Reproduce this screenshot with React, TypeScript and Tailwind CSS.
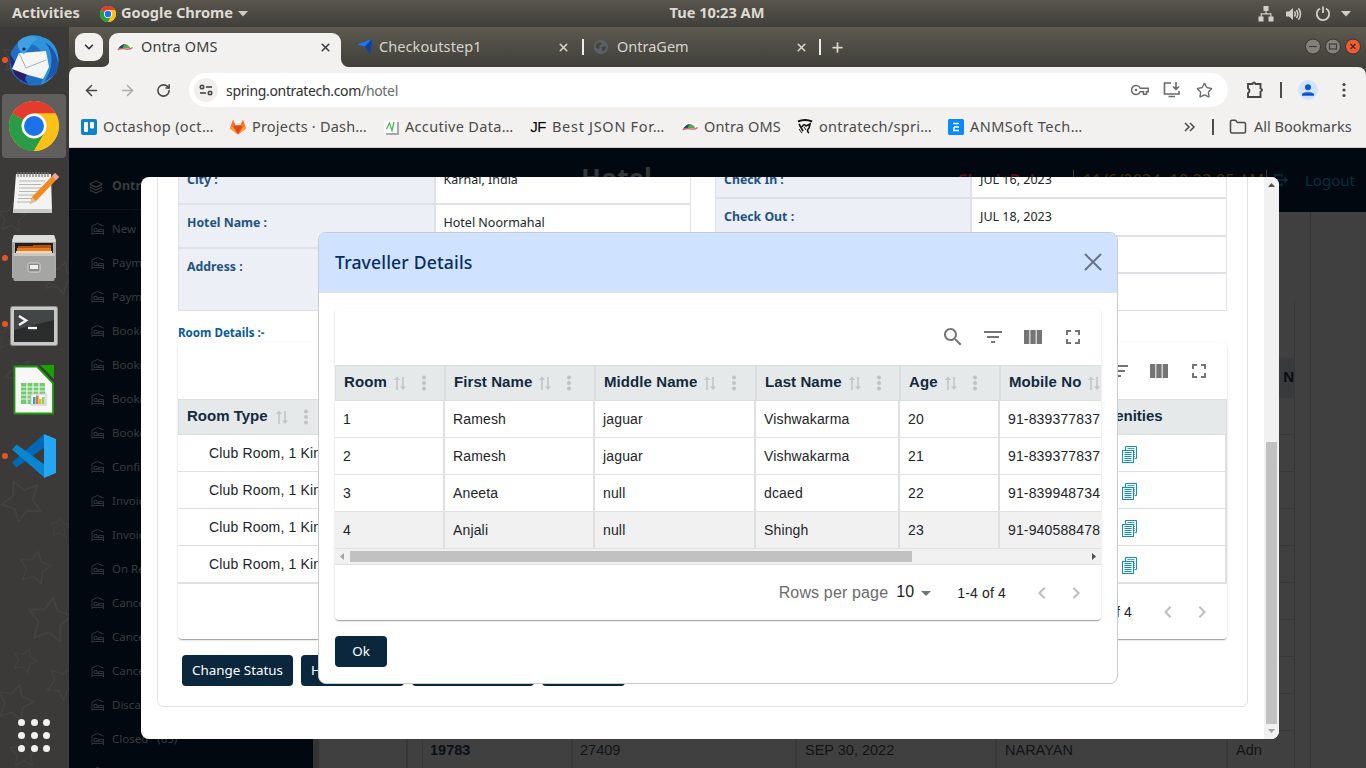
import type { ReactNode } from "react";
import { ArrowLeft, ArrowRight, ChevronDown, Folder, Layers, Plus, RotateCw, Star, X } from "lucide-react";

/* ---------- small drawings ---------- */

function ChromeLogo({ size }: { size: number }) {
  return (
    <svg width={size} height={size} viewBox="0 0 48 48">
      <circle cx="24" cy="24" r="24" fill="#fbc116" />
      <path d="M24 24 L3.2 12 A24 24 0 0 1 44.8 12 L24 12 Z" fill="#e33b2e" />
      <path d="M24 24 L3.2 12 A24 24 0 0 0 24 48 L34.4 30 Z" fill="#2a9c47" />
      <path d="M24 12 H44.8 A24 24 0 0 1 24 48 L34.4 30 Z" fill="#fbc116" />
      <circle cx="24" cy="24" r="12" fill="#fff" />
      <circle cx="24" cy="24" r="9.6" fill="#1a73e8" />
    </svg>
  );
}

function OntraLogo() {
  return (
    <svg width="16" height="16" viewBox="0 0 16 16">
      <rect y="4" width="16" height="8" fill="#f8f8f8" />
      <path d="M1 9.800C3 6.500 5.500 5 8 5L7 9.500Z" fill="#27467f" />
      <path d="M5.500 9.500C6.500 6.500 7.500 5 8.500 5C11 5.500 12.500 7.500 13.500 9.500Z" fill="#57a84a" />
      <path d="M.5 11C4 9.400 7 9.600 9.500 10.200C12 10.600 14 10 15.600 8.500" fill="none" stroke="#e2505a" strokeWidth="1.100" />
    </svg>
  );
}

function Thunderbird() {
  return (
    <svg width="52" height="52" viewBox="0 0 52 52">
      <circle cx="26" cy="27" r="24.5" fill="#1f6fc4" />
      <path d="M12 8C18-1 30 1 34 3C44 5 52 16 50 29C49 40 42 48 32 51C38 42 41 30 34 18C28 10 20 8 12 8Z" fill="#2f93dc" />
      <path d="M36 8C46 16 46 34 36 48L48 40C53 28 48 14 36 8Z" fill="#1b57ae" />
      <path d="M2 20C1 32 6 44 20 50L12 36Z" fill="#1f2b7d" />
      <path d="M5 36L20 38L16 47C10 45 6 41 5 36Z" fill="#2c1d66" />
      <path d="M11 19L38 17L41 33L35 45L20 41L4 35Z" fill="#f5f5f6" />
      <path d="M11 19L18 34L38 26" fill="none" stroke="#a9aeb6" strokeWidth="1" />
      <path d="M10 8C14 2 24 0 30 5C24 7 22 14 16 20C12 18 9 14 10 8Z" fill="#3fa0e4" />
      <circle cx="16" cy="15" r="1.6" fill="#0d2a56" />
    </svg>
  );
}

function TextEditor() {
  return (
    <svg width="50" height="48" viewBox="0 0 50 48">
      <path d="M7 6H42L43 44H4Z" fill="#f3f3f1" />
      <path d="M4 41H43V45H4Z" fill="#c9c9c6" />
      <path d="M9 4V9M12 4V9M15 4V9M18 4V9M21 4V9M24 4V9M27 4V9M30 4V9M33 4V9M36 4V9M39 4V9" stroke="#777" strokeWidth="1.3" />
      <path d="M10 13H36M10 16.5H32M10 20H35M10 23.5H30M9 27H28M9 30.500H26M8 34H22" stroke="#b5b5b3" strokeWidth="1" />
      <path d="M46 5L50 9L27 33L21 36L23 29Z" fill="#f08a1d" />
      <path d="M46 5L50 9L47 12L43 8Z" fill="#e7a6a3" />
      <path d="M23 29L27 33L21 36Z" fill="#dcc39c" />
    </svg>
  );
}

function FilesIcon() {
  return (
    <svg width="46" height="48" viewBox="0 0 46 48">
      <path d="M1 6L3 1H43L45 6V44H1Z" fill="#a9a9a7" />
      <path d="M3 1H43L45 8H1Z" fill="#dcdcda" />
      <rect x="4" y="9" width="38" height="14" fill="#23211f" />
      <path d="M7 12H22V11H40V18H7Z" fill="#b9500f" />
      <rect x="6" y="14" width="34" height="3" fill="#e57b25" />
      <rect x="5" y="17" width="36" height="3" fill="#f3d8ab" />
      <rect x="2.500" y="19" width="41" height="28" rx="1.500" fill="#a5a5a3" />
      <path d="M2.500 19H43.500V22H2.500Z" fill="#c9c9c7" />
      <rect x="17" y="29" width="12" height="9" rx="1.500" fill="#8b8b89" stroke="#d6d6d4" />
      <rect x="19" y="31" width="8" height="4" fill="#f0f0ef" />
    </svg>
  );
}

function TerminalIcon() {
  return (
    <svg width="48" height="40" viewBox="0 0 48 40">
      <rect x=".5" y=".5" width="47" height="39" rx="2" fill="#c8c8c6" stroke="#8a8a88" />
      <rect x="4" y="4" width="40" height="32" fill="#2b2d2d" />
      <path d="M4 4H44V14L4 24Z" fill="#434646" />
      <path d="M9 10L16 14.500L9 19" fill="none" stroke="#f2f2f2" strokeWidth="2.600" />
      <path d="M18 22H27" stroke="#f2f2f2" strokeWidth="2.400" />
    </svg>
  );
}

function CalcIcon() {
  return (
    <svg width="42" height="50" viewBox="0 0 42 50">
      <path d="M1.500 1.500H24L40 18V48.500H1.500Z" fill="#f7f8f6" stroke="#1f9a10" strokeWidth="1.800" />
      <path d="M27 0H41V14Z" fill="#18a303" />
      <rect x="8" y="18" width="24" height="21" fill="#76c973" />
      <path d="M8 22H32M8 26H32M8 30H32M8 34H32M14 18V39M20 18V39M26 18V39" stroke="#e8f8e5" strokeWidth="1.200" />
      <rect x="18" y="29" width="15" height="11" fill="#f5f5f5" stroke="#c5c5c5" />
      <rect x="20" y="32" width="2.500" height="7" fill="#3b9ad8" />
      <rect x="23" y="30.500" width="2.500" height="8.500" fill="#e0782f" />
      <rect x="26" y="34" width="2.500" height="5" fill="#e9b929" />
      <rect x="29" y="32" width="2.500" height="7" fill="#8dcf6c" />
    </svg>
  );
}

function VsCode() {
  return (
    <svg width="46" height="46" viewBox="0 0 46 46">
      <path d="M33 1L1 29.500L5.500 34.500L34 14Z" fill="#0068b5" />
      <path d="M1 16.500L5.500 11.500L34 32V45Z" fill="#0a86d1" />
      <path d="M33 1L45 6V40L33 45Z" fill="#25a5f2" />
    </svg>
  );
}

function BedIcon() {
  return (
    <svg width="14" height="14" viewBox="0 0 14 14" fill="none" stroke="#303438" strokeWidth="1">
      <path d="M1 13V4L6.500 1.500L12.500 4M1 11.500H12.500M12.500 13V7.500H7.500V9.500M3 6.500H6V9.500H3ZM3 9.500H12.500" />
    </svg>
  );
}

function SortIcon() {
  return (
    <svg width="12" height="15" viewBox="0 0 12 15" className="shrink-0">
      <path d="M3 .5L6 4H3.800V14H2.200V4H0Z" fill="#c3c6c7" />
      <path d="M9 14L6 10.500H8.200V1H9.800V10.500H12Z" fill="#c3c6c7" />
    </svg>
  );
}

function DotsIcon() {
  return (
    <svg width="4" height="16" viewBox="0 0 4 16" className="shrink-0" fill="#bfc2c3">
      <circle cx="2" cy="2.500" r="2" />
      <circle cx="2" cy="8" r="2" />
      <circle cx="2" cy="13.500" r="2" />
    </svg>
  );
}

const toolPaths = [
  "M15.5 14h-.79l-.28-.27C15.41 12.59 16 11.11 16 9.5 16 5.91 13.09 3 9.5 3S3 5.91 3 9.5 5.91 16 9.5 16c1.61 0 3.09-.59 4.23-1.57l.27.28v.79l5 4.99L20.49 19zm-6 0C7.01 14 5 11.99 5 9.5S7.01 5 9.5 5 14 7.01 14 9.5 11.99 14 9.5 14",
  "M10 18h4v-2h-4zM3 6v2h18V6zm3 7h12v-2H6z",
  "M14.67 5v14H9.33V5zm1 14H21V5h-5.33zm-7.34 0V5H3v14z",
  "M7 14H5v5h5v-2H7zm-2-4h2V7h3V5H5zm12 7h-3v2h5v-5h-2zM14 5v2h3v3h2V5z",
];

function CardToolbar() {
  return (
    <div className="flex h-14 shrink-0 items-center justify-end pr-2">
      {toolPaths.map((d) => (
        <div key={d} className="flex size-10 items-center justify-center">
          <svg width="24" height="24" viewBox="0 0 24 24" fill="#757575">
            <path d={d} />
          </svg>
        </div>
      ))}
    </div>
  );
}

function Chevron({ d }: { d: string }) {
  return (
    <svg width="24" height="24" viewBox="0 0 24 24" fill="#bdbdbd">
      <path d={d} />
    </svg>
  );
}

function CardFooter() {
  return (
    <div className="flex h-14 shrink-0 items-center justify-end pr-[13px] pt-px text-[14px] tracking-[0.15px] text-[#212121]">
      <span className="text-[16px] text-[#6b6b6b]">Rows per page</span>
      <span className="ml-2 pb-[2px] text-[16px] leading-5">10</span>
      <svg width="24" height="24" viewBox="0 0 24 24" fill="#757575" className="mr-[19px]">
        <path d="M7 10l5 5 5-5z" />
      </svg>
      <span className="mr-[24px]">1-4 of 4</span>
      <Chevron d="M15.41 7.41 14 6l-6 6 6 6 1.410-1.410L10.830 12z" />
      <div className="w-[10px]" />
      <Chevron d="M10 6 8.590 7.410 13.170 12l-4.580 4.590L10 18l6-6z" />
    </div>
  );
}

function CopyIcon() {
  return (
    <svg width="16" height="18" viewBox="0 0 16 18" fill="none" stroke="#0d8fc0">
      <path d="M3.500 4V.5H14.500V12.500H12.500" />
      <path d="M5.500 2.500H12.500M5.500 4.500H12.500M12 6.500H13M12 8.500H13M12 10.500H13" strokeWidth=".8" />
      <rect x=".5" y="4.500" width="11" height="12" fill="#fff" />
      <path d="M2.500 6.500H9.500M2.500 8.500H9.500M2.500 10.500H9.500M2.500 12.500H9.500M2.500 14.500H9.500" />
    </svg>
  );
}

/* ---------- desktop ---------- */

function TopBar() {
  return (
    <div className="flex h-[27px] shrink-0 items-center bg-gradient-to-b from-[#58564d] to-[#403f3a] text-[14.600px] font-bold text-[#dfdbd2]">
      <div className="w-[100px] pb-px pl-3">Activities</div>
      <ChromeLogo size={16} />
      <div className="ml-[5px] w-[117px] pb-px">Google Chrome</div>
      <svg width="10" height="6" viewBox="0 0 10 6" fill="#cfcbc3"><path d="M0 0H10L5 5.500Z" /></svg>
      <div className="w-[938px] pb-px text-center">Tue 10:23 AM</div>
      <div className="flex grow items-center pl-[72px]">
        <svg width="16" height="16" viewBox="0 0 16 16" fill="#d3cfc8">
          <path d="M5.500 0H10.500V5H8.600V7.200H13.400V10.500H15.500V15.500H10.500V10.500H12.200V8.400H3.800V10.500H5.500V15.500H.5V10.500H2.600V7.200H7.400V5H5.500Z" />
        </svg>
        <svg width="16" height="16" viewBox="0 0 16 16" className="ml-3" fill="none" stroke="#d3cfc8" strokeWidth="1.500">
          <path d="M0 5.500H3L7 2V14L3 10.500H0Z" fill="#d3cfc8" stroke="none" />
          <path d="M8.500 5.500Q10 8 8.500 10.500M10.500 4Q13 8 10.500 12M12.500 2.200Q16.500 8 12.500 13.800" />
        </svg>
        <svg width="16" height="16" viewBox="0 0 16 16" className="ml-[13px]" fill="none" stroke="#d3cfc8" strokeWidth="1.800">
          <path d="M5 2.500A6.200 6.200 0 1 0 11 2.500M8 .5V7" />
        </svg>
        <svg width="10" height="6" viewBox="0 0 10 6" className="ml-[10px]" fill="#d3cfc8"><path d="M0 0H10L5 5.500Z" /></svg>
      </div>
    </div>
  );
}

const dockItems: { icon: ReactNode; running: boolean; active?: boolean }[] = [
  { icon: <Thunderbird />, running: true },
  { icon: <ChromeLogo size={50} />, running: true, active: true },
  { icon: <TextEditor />, running: false },
  { icon: <FilesIcon />, running: true },
  { icon: <div className="pt-1"><TerminalIcon /></div>, running: true },
  { icon: <CalcIcon />, running: false },
  { icon: <VsCode />, running: true },
];

const starPath = "M0-20L6-8L20-6L10 4L12 19L0 12L-12 19L-10 4L-20-6L-6-8Z";
const stars = [
  [18, 30, 0.8, 10], [55, 110, 0.6, 30], [12, 190, 0.7, 5], [60, 250, 0.8, 20], [8, 310, 0.6, 0], [20, 345, 0.7, 40],
  [22, 475, 1, 190], [60, 500, 0.5, 5], [35, 540, 0.8, 12], [50, 592, 1.1, 8], [25, 633, 0.6, 20], [15, 675, 0.9, 15], [63, 655, 0.8, 30], [24, 725, 0.7, 0],
];

function Dock() {
  return (
    <div className="relative flex w-[69px] shrink-0 flex-col justify-between bg-[#3c3a38]">
      <svg width="69" height="741" className="absolute inset-0" fill="none" stroke="#444240" strokeWidth="1.800" strokeLinejoin="round">
        {stars.map(([x, y, s, r]) => (
          <path key={`${x}-${y}`} d={starPath} transform={`translate(${x} ${y}) rotate(${r}) scale(${s})`} />
        ))}
      </svg>
      <div className="relative">
        {dockItems.map((item, i) => (
          <div key={i} className="flex h-[66px] items-center">
            <div className="flex w-[2px] items-center">
              {item.running && <span className="ml-[2px] size-[6px] shrink-0 rounded-full bg-[#e95420]" />}
            </div>
            <div className={item.active ? "flex size-16 items-center justify-center rounded-[4px] bg-[#605f5d]" : "flex size-16 items-center justify-center"}>
              {item.icon}
            </div>
          </div>
        ))}
      </div>
      <div className="relative mb-[16px] ml-[17px] grid w-[34px] grid-cols-3 gap-x-[5px] gap-y-[6px] pl-px">
        {Array.from({ length: 9 }, (_, i) => (
          <span key={i} className="size-[7px] rounded-full bg-[#f2f1f0]" />
        ))}
      </div>
    </div>
  );
}

/* ---------- browser ---------- */

function TabStrip() {
  return (
    <div className="flex h-10 shrink-0 items-end bg-gradient-to-b from-[#5c5a50] to-[#403f3a] text-[14.5px] text-[#d8d4cb]">
      <div className="mb-[6px] ml-[6px] flex h-7 w-7 items-center justify-center rounded-[9px] bg-[#f2f1f0]">
        <ChevronDown size={14} strokeWidth={2.600} color="#2b2b2b" />
      </div>
      <svg width="8" height="8" className="-mr-px ml-[-1px]"><path d="M8 0V8H0A8 8 0 0 0 8 0Z" fill="#f2f1f0" /></svg>
      <div className="flex h-[34px] w-[232px] items-center rounded-t-[9px] bg-[#f2f1f0] pb-[6px] text-[#3c3c3c]">
        <div className="ml-2"><OntraLogo /></div>
        <span className="ml-2 grow tracking-[0.1px]">Ontra OMS</span>
        <X size={13} strokeWidth={3} className="mr-[9px]" />
      </div>
      <svg width="8" height="8"><path d="M0 0V8H8A8 8 0 0 1 0 0Z" fill="#f2f1f0" /></svg>
      <div className="flex h-10 w-[233px] items-center pl-2">
        <svg width="16" height="16" viewBox="0 0 16 16">
          <path d="M0 5.500L15 0L8 7.500Z" fill="#1878f3" />
          <path d="M15 0L13 15L8 7.500Z" fill="#0a3fae" />
        </svg>
        <span className="ml-[6px] grow tracking-[0.080px]">Checkoutstep1</span>
        <X size={13} strokeWidth={3} className="mr-[12px]" />
      </div>
      <div className="mb-3 h-4 w-[2px] bg-[#efede9]" />
      <div className="flex h-10 w-[235px] items-center pl-[9px]">
        <svg width="16" height="16" viewBox="0 0 16 16">
          <circle cx="8" cy="8" r="7.200" fill="#5b6066" />
          <path d="M3 5L7 3L9 5L6 7L7 9L5 10L2.500 8ZM9 8L13 7L12.500 10L10 12.500L9 11Z" fill="#45453f" />
        </svg>
        <span className="ml-2 grow">OntraGem</span>
        <X size={13} strokeWidth={3} className="mr-[11px]" />
      </div>
      <div className="mb-3 h-4 w-[2px] bg-[#efede9]" />
      <div className="flex h-10 w-8 items-center justify-center"><Plus size={15} strokeWidth={2.800} /></div>
      <div className="mb-[12px] ml-auto mr-[5px] flex gap-1">
        <svg width="16" height="17" viewBox="0 0 16 17"><circle cx="8" cy="8.500" r="7.500" fill="#83817a" stroke="#34332f" /><path d="M4 8.500H12" stroke="#403f3a" strokeWidth="1.200" /></svg>
        <svg width="16" height="17" viewBox="0 0 16 17"><circle cx="8" cy="8.500" r="7.500" fill="#83817a" stroke="#34332f" /><rect x="4.500" y="6" width="7" height="5" fill="none" stroke="#403f3a" strokeWidth="1.200" /></svg>
        <svg width="16" height="17" viewBox="0 0 16 17"><circle cx="8" cy="8.500" r="7.500" fill="#ee5c31" stroke="#34332f" /><path d="M5.500 6L10.500 11M10.500 6L5.500 11" stroke="#4a2a1c" strokeWidth="1.200" /></svg>
      </div>
    </div>
  );
}

function Toolbar() {
  return (
    <div className="flex shrink-0 bg-[#403f3a]">
      <div className="flex h-[46px] grow items-center rounded-t-[8px] bg-[#f2f1f0] pl-1 text-[#474747]">
        <div className="flex w-9 justify-center"><ArrowLeft size={17} strokeWidth={2.200} /></div>
        <div className="flex w-9 justify-center text-[#adacab]"><ArrowRight size={17} strokeWidth={2.200} /></div>
        <div className="flex w-9 justify-center"><RotateCw size={15} strokeWidth={2.500} /></div>
        <div className="ml-2 flex h-[34px] w-[1039px] items-center rounded-full bg-white pl-[5px] text-[#6a6a6a]">
          <div className="flex size-6 items-center justify-center rounded-full bg-[#f0efee]">
            <svg width="14" height="12" viewBox="0 0 14 12" fill="none" stroke="#474747" strokeWidth="1.600">
              <circle cx="3" cy="3" r="1.700" /><path d="M7 3H13" /><circle cx="11" cy="9" r="1.700" /><path d="M1 9H7" />
            </svg>
          </div>
          <span className="ml-2 grow text-[14px] tracking-[-0.330px]"><span className="text-[#303030]">spring.ontratech.com</span>/hotel</span>
          <svg width="18" height="12" viewBox="0 0 18 12" fill="none" stroke="currentColor" strokeWidth="1.500">
            <path d="M9.200 4.200A4.500 4.500 0 1 0 9.200 7.800H12.500V10.200H15.500V7.800H17.200V4.200Z" /><circle cx="5" cy="6" r="1.300" fill="currentColor" stroke="none" />
          </svg>
          <svg width="18" height="16" viewBox="0 0 18 16" fill="none" stroke="currentColor" strokeWidth="1.600" className="ml-[14px]">
            <path d="M8 1H1.500V12H16V9M5.500 14.500H12M13 0V7M10 4.500L13 7.300L16 4.500" />
          </svg>
          <Star size={17} strokeWidth={1.900} className="ml-[15px] mr-[15px]" />
        </div>
        <div className="flex w-[52px] justify-center pl-[2px]">
          <svg width="18" height="18" viewBox="0 0 18 18" fill="none" stroke="currentColor" strokeWidth="1.900">
            <path d="M2 3H6.500Q8 0 9.500 3H14.500V7.500Q17.500 9 14.500 10.800V16H2V12.200Q5 9.800 2 7.300Z" />
          </svg>
        </div>
        <div className="h-4 w-[2px] bg-[#4d4d4d]" />
        <div className="flex w-[52px] justify-center">
          <svg width="20" height="20" viewBox="0 0 20 20">
            <circle cx="10" cy="10" r="10" fill="#d3e3fd" /><circle cx="10" cy="7.200" r="3" fill="#0b57d0" /><path d="M4 15.800V14C5 11.500 15 11.500 16 14V15.800Z" fill="#0b57d0" />
          </svg>
        </div>
        <div className="flex w-5 justify-center">
          <svg width="4" height="16" viewBox="0 0 4 16" fill="#474747"><circle cx="2" cy="2.500" r="1.600" /><circle cx="2" cy="8" r="1.600" /><circle cx="2" cy="13.500" r="1.600" /></svg>
        </div>
      </div>
    </div>
  );
}

function Bookmark({ icon, label, width }: { icon: ReactNode; label: string; width: string }) {
  return (
    <div className={`flex items-center gap-[6px] whitespace-nowrap ${width}`}>
      <div className="flex w-4 shrink-0 justify-center">{icon}</div>
      {label}
    </div>
  );
}

function Bookmarks() {
  return (
    <div className="flex h-[35px] shrink-0 items-center border-b border-[#d4d3d2] bg-[#f2f1f0] pb-[6px] pl-3 text-[14.5px] text-[#4a4a4a]">
      <Bookmark width="w-[149px] tracking-[0.350px]" label="Octashop (oct…" icon={
        <svg width="16" height="16" viewBox="0 0 16 16"><rect width="16" height="16" rx="2" fill="#0a84cc" /><rect x="3" y="3" width="4" height="10" rx="1" fill="#fff" /><rect x="9" y="3" width="4" height="6.500" rx="1" fill="#fff" /></svg>} />
      <Bookmark width="w-[153px] tracking-[0.200px]" label="Projects · Dash…" icon={
        <svg width="16" height="16" viewBox="0 0 16 16"><path d="M8 15.500L0 9.500L3 .5L5.500 6H10.500L13 .5L16 9.500Z" fill="#fc6d26" /><path d="M8 15.500L3.500 7H12.500Z" fill="#e24329" /><path d="M0 9.500L2 7L8 15.500ZM16 9.500L14 7L8 15.500Z" fill="#fca326" /></svg>} />
      <Bookmark width="w-[147px] tracking-[0.320px]" label="Accutive Data…" icon={
        <svg width="15" height="15" viewBox="0 0 15 15"><rect x="2" y="2" width="13" height="13" fill="#a9a9a9" /><rect width="13" height="13" fill="#fbfbfb" /><path d="M2.500 9L5.500 3L8 10.500L10 2" fill="none" stroke="#4caf50" strokeWidth="1.200" /></svg>} />
      <Bookmark width="w-[152px] tracking-[0.700px]" label="Best JSON For…" icon={
        <span className="font-['Liberation_Sans'] text-[15px] leading-4 tracking-[-0.5px] text-black">JF</span>} />
      <Bookmark width="w-[115px] tracking-[0.150px]" label="Ontra OMS" icon={<OntraLogo />} />
      <Bookmark width="w-[151px] tracking-[0.300px]" label="ontratech/spri…" icon={
        <svg width="16" height="16" viewBox="0 0 16 16" fill="none" stroke="#111"><path d="M1 2.500Q8-.5 15 2.500" strokeWidth="2" /><path d="M2 5L6 12M5 8Q7 4 9 7L13 5L12 9Q9 12 12 14" strokeWidth="1.600" /><path d="M2 10L5 14M7 8L9 11" /></svg>} />
      <Bookmark width="w-[236px] tracking-[0.450px]" label="ANMSoft Tech…" icon={
        <svg width="16" height="16" viewBox="0 0 16 16"><rect width="16" height="16" rx="1.500" fill="#0a8bff" /><path d="M5 4.500H11M6 8H11M6 8V11.500M5 11.500H11" stroke="#fff" strokeWidth="1.400" /></svg>} />
      <svg width="11" height="10" viewBox="0 0 11 10" fill="none" stroke="#474747" strokeWidth="1.500"><path d="M1 1L5 5L1 9M6 1L10 5L6 9" /></svg>
      <div className="ml-[17px] h-4 w-[2px] bg-[#4d4d4d]" />
      <Folder size={18} strokeWidth={2} className="ml-[15px] mr-[7px]" />
      <span className="whitespace-nowrap">All Bookmarks</span>
    </div>
  );
}

/* ---------- dimmed page behind the dialogs ---------- */

const menu = [
  "New", "Payment", "Payment", "Booking", "Booking", "Booking", "Booked", "Confirmed", "Invoice", "Invoice",
  "On Request", "Cancelled", "Cancelled", "Cancelled", "Discard", "Closed   (65)", "All",
];

function Backdrop() {
  return (
    <div className="flex h-full bg-[#404040]">
      <div className="flex w-[244px] shrink-0 flex-col bg-[#01080f] text-[11.5px] text-[#3a3c3e]">
        <div className="flex h-[62px] shrink-0 items-center border-b border-[#0a131b] pl-5 pt-4 text-[12.500px] font-bold">
          <Layers size={14} className="mr-[9px]" />
          Ontra
        </div>
        <div className="pt-[2px]">
          {menu.map((m, i) => (
            <div key={i} className="flex h-[34px] items-center whitespace-pre pl-[22px]">
              <BedIcon />
              <span className="ml-[7px]">{m}</span>
            </div>
          ))}
        </div>
      </div>
      <div className="flex min-w-0 grow flex-col">
        <div className="flex h-16 shrink-0 items-center whitespace-nowrap bg-[#01080f] text-[15px]">
          <span className="ml-[268px] w-[376px] pb-[4px] text-[26px] font-bold text-[#34373a]">Hotel</span>
          <span className="w-[116px] text-[16px] font-bold text-[#520f17]">Check Balance</span>
          <span className="h-5 w-px bg-[#33383c]" />
          <span className="ml-[9px] w-[183px] text-[16px] tracking-[0.200px] text-[#4a2c0a]">11/6/2024, 10:23:05 AM</span>
          <span className="h-5 w-px bg-[#33383c]" />
          <svg width="14" height="12" viewBox="0 0 14 12" fill="none" stroke="#063040" strokeWidth="1.400" className="ml-[7px]">
            <path d="M8 3V1H1V11H8V9M4 6H13M10.500 3.500L13 6L10.500 8.500" />
          </svg>
          <span className="ml-[17px] text-[#063040]">Logout</span>
        </div>
        <div className="flex grow">
          <div className="w-[6px] bg-[#343434]" />
          <div className="flex w-[992px] border-r border-[#353535]">
            <div className="w-[88px] border-r border-[#353535]" />
            <div className="mr-[15px] mt-[88px] flex grow flex-col border-l border-r border-[#383838] font-['Liberation_Sans'] text-[14.500px] text-[#111417]">
              <div className="h-[58px] shrink-0" />
              <div className="flex h-10 shrink-0 items-center justify-end bg-[#383b3c] pb-[2px] text-[15px] font-bold text-[#080d14]">Agent N</div>
              {Array.from({ length: 9 }, (_, i) => (
                <div key={i} className="h-[37px] shrink-0 border-b border-[#373737]" />
              ))}
              <div className="flex h-[37px] shrink-0 items-center [&>div]:pt-[2px]">
                <div className="h-full w-[15px] border-r border-[#383838]" />
                <div className="flex h-full w-[150px] items-center border-r-2 border-[#383838] pl-[7px] font-bold text-[#0a1019]">19783</div>
                <div className="flex h-full w-[224px] items-center border-r-2 border-[#383838] pl-[7px]">27409</div>
                <div className="flex h-full w-[200px] items-center border-r-2 border-[#383838] pl-2">SEP 30, 2022</div>
                <div className="flex h-full w-[231px] items-center border-r-2 border-[#383838] pl-2">NARAYAN</div>
                <div className="pl-2">Adn</div>
              </div>
            </div>
          </div>
        </div>
      </div>
    </div>
  );
}

/* ---------- booking dialog ---------- */

function DetailRow({ label, value, height }: { label: string; value: string; height: string }) {
  return (
    <div className={`flex ${height}`}>
      <div className="w-1/2 border border-[#dee2e6] bg-[#eceff5] pl-2 pt-[9px] text-[12.300px] font-bold leading-[18px] text-[#1f5380]">{label}</div>
      <div className="w-1/2 border border-[#dee2e6] pl-2 pt-[9px] text-[12.500px] leading-[18px] text-[#212529]">{value}</div>
    </div>
  );
}

function BookingDialog() {
  return (
    <div className="absolute left-[72px] top-[29px] flex h-[562px] w-[1138px] overflow-hidden rounded-[8px] bg-white">
      <div className="h-full grow overflow-hidden pl-4">
        <div className="-mt-[17px] h-[547px] w-[1091px] rounded-b-[6px] border border-[#dee2e6] px-5">
          <div className="-mt-px flex justify-between">
            <div className="w-[513px]">
              <DetailRow label="City :" value="Karnal, India" height="h-[44px] [&>div]:pt-[10px]" />
              <DetailRow label="Hotel Name :" value="Hotel Noormahal" height="h-[44px]" />
              <DetailRow label="Address :" value="" height="h-[63px]" />
            </div>
            <div className="w-[512px]">
              <DetailRow label="Check In :" value="JUL 16, 2023" height="h-[38px] [&>div]:pt-[10px]" />
              <DetailRow label="Check Out :" value="JUL 18, 2023" height="h-[38px]" />
              <DetailRow label="" value="" height="h-[37px]" />
              <DetailRow label="" value="" height="h-[38px]" />
            </div>
          </div>
          <div className="flex h-[32px] items-end pb-px text-[11.600px] font-bold leading-[18px] text-[#075a9c]">Room Details :-</div>
          <div className="flex flex-col rounded-[4px] font-['Liberation_Sans'] shadow-[0_2px_1px_-1px_rgba(0,0,0,0.2),0_1px_1px_rgba(0,0,0,0.14),0_1px_3px_rgba(0,0,0,0.12)]">
            <CardToolbar />
            <div className="flex h-9 items-center border border-[#dcdfe0] bg-[#e5e9ea] pl-2 text-[15px] font-bold text-[#13293f]">
              <span className="mr-[8px] pb-[2px]">Room Type</span>
              <SortIcon />
              <span className="ml-[16px]"><DotsIcon /></span>
              <span className="ml-auto w-[135px] pb-[2px]">Amenities</span>
            </div>
            {[0, 1, 2, 3].map((i) => (
              <div key={i} className="flex h-[37px] items-center border-b border-r-2 border-[#e0e0e0] pl-[31px] text-[14px] tracking-[0.15px] text-[#212529]">
                <span className="grow">Club Room, 1 King</span>
                <span className="w-[103px] pt-[3px]"><CopyIcon /></span>
              </div>
            ))}
            <div className="flex flex-col border-t border-[#e0e0e0] [&>div]:h-[55px]">
              <CardFooter />
            </div>
          </div>
          <div className="mt-4 flex gap-2 pl-1 text-[13.400px] text-white">
            <div className="flex h-[31px] w-[111px] items-center justify-center whitespace-nowrap rounded-[4px] bg-[#0b273d]">Change Status</div>
            <div className="flex h-[31px] w-[103px] items-center rounded-[4px] bg-[#0b273d] pl-[10px]">History</div>
            <div className="h-[31px] w-[122px] rounded-[4px] bg-[#0b273d]" />
            <div className="h-[31px] w-[83px] rounded-[4px] bg-[#0b273d]" />
          </div>
        </div>
      </div>
      <div className="flex w-[15px] flex-col items-center bg-[#f1f1f1]">
        <svg width="15" height="15" viewBox="0 0 15 15" fill="#505050"><path d="M4 10L7.500 6L11 10Z" /></svg>
        <div className="mt-[250px] h-[282px] w-[11px] bg-[#c1c1c1]" />
        <svg width="15" height="15" viewBox="0 0 15 15" fill="#a3a3a3"><path d="M4 5L7.500 9L11 5Z" /></svg>
      </div>
    </div>
  );
}

/* ---------- traveller dialog ---------- */

const columns = [
  { title: "Room", width: "w-[110px]" },
  { title: "First Name", width: "w-[150px]" },
  { title: "Middle Name", width: "w-[161px]" },
  { title: "Last Name", width: "w-[144px]" },
  { title: "Age", width: "w-[100px]" },
  { title: "Mobile No", width: "w-[150px]" },
];

const travellers = [
  ["1", "Ramesh", "jaguar", "Vishwakarma", "20", "91-839377837"],
  ["2", "Ramesh", "jaguar", "Vishwakarma", "21", "91-839377837"],
  ["3", "Aneeta", "null", "dcaed", "22", "91-839948734"],
  ["4", "Anjali", "null", "Shingh", "23", "91-940588478"],
];

function TravellerDialog() {
  return (
    <div className="absolute left-[249px] top-[84px] flex h-[452px] w-[800px] flex-col overflow-hidden rounded-[8px] border border-[#c9cbce] bg-white">
      <div className="flex h-[60px] shrink-0 items-center justify-between border-b border-[#dee2e6] bg-[#cfe2ff] px-[15px] pb-px">
        <span className="pl-px text-[17.600px] font-medium tracking-[0.150px] text-[#052c65]">Traveller Details</span>
        <svg width="18" height="18" viewBox="0 0 18 18" stroke="#677180" strokeWidth="1.900" strokeLinecap="round"><path d="M1.500 1.500L16.500 16.500M16.500 1.500L1.500 16.500" /></svg>
      </div>
      <div className="flex flex-col items-start p-4">
        <div className="flex w-[766px] flex-col overflow-hidden rounded-[4px] font-['Liberation_Sans'] shadow-[0_2px_1px_-1px_rgba(0,0,0,0.2),0_1px_1px_rgba(0,0,0,0.14),0_1px_3px_rgba(0,0,0,0.12)]">
          <CardToolbar />
          <div className="flex">
            {columns.map((c) => (
              <div key={c.title} className={`flex h-9 shrink-0 items-center whitespace-nowrap border border-[#dcdfe0] bg-[#e5e9ea] pl-2 text-[15px] font-bold tracking-[0.080px] text-[#13293f] ${c.width}`}>
                <span className="mr-[7px] pb-[2px]">{c.title}</span>
                <SortIcon />
                <span className="ml-[16px]"><DotsIcon /></span>
              </div>
            ))}
          </div>
          {travellers.map((row, r) => (
            <div key={r} className={r === 3 ? "flex bg-[#f1f1f1]" : "flex"}>
              {row.map((cell, i) => (
                <div key={i} className={`flex h-[37px] shrink-0 items-center whitespace-nowrap border-b border-r-2 border-[#e0e0e0] pl-2 text-[14px] tracking-[0.15px] text-[#212529] ${columns[i].width}`}>
                  {cell}
                </div>
              ))}
            </div>
          ))}
          <div className="flex h-[15px] items-center bg-[#f1f1f1]">
            <svg width="15" height="15" viewBox="0 0 15 15" fill="#a3a3a3"><path d="M9 4V11L5 7.500Z" /></svg>
            <div className="h-[11px] w-[562px] bg-[#c1c1c1]" />
            <svg width="15" height="15" viewBox="0 0 15 15" fill="#505050" className="ml-auto"><path d="M6 4V11L10 7.500Z" /></svg>
          </div>
          <div className="flex flex-col border-t border-[#e0e0e0] [&>div]:h-[55px]">
            <CardFooter />
          </div>
        </div>
        <div className="mt-[16px] flex h-[31px] w-[52px] items-center justify-center rounded-[4px] bg-[#0b273d] text-[13.400px] text-white">Ok</div>
      </div>
    </div>
  );
}

export default function App() {
  return (
    <div className="flex h-[768px] w-[1366px] flex-col overflow-hidden font-['Noto_Sans',sans-serif]">
      <TopBar />
      <div className="flex h-[741px]">
        <Dock />
        <div className="flex w-[1297px] flex-col">
          <TabStrip />
          <Toolbar />
          <Bookmarks />
          <div className="relative h-[620px] overflow-hidden">
            <Backdrop />
            <BookingDialog />
            <TravellerDialog />
          </div>
        </div>
      </div>
    </div>
  );
}
